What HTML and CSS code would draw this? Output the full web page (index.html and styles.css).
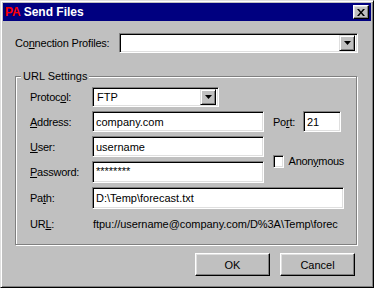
FILE: index.html
```html
<!DOCTYPE html>
<html lang="en">

<head>
    <meta charset="UTF-8">
    <title>Send Files</title>
    <link rel="stylesheet" href="styles.css">
</head>

<body>
    <div class="window">
        <div class="titlebar">
            <span class="title"><span class="title-logo">PA</span> Send Files</span>
            <button class="close-btn" type="button">
                <svg width="8" height="7" viewBox="0 0 8 7">
                    <path d="M0 0h2l2 2.4L6 0h2L5 3.5 8 7H6L4 4.6 2 7H0l3-3.5z" fill="#000" />
                </svg>
            </button>
        </div>
        <div class="dialog-body">
            <div class="profile-row">
                <label class="profile-label">Co<u>n</u>nection Profiles:</label>
                <div class="combo profile-combo">
                    <span class="combo-value"></span>
                    <span class="combo-btn">
                        <svg width="7" height="4" viewBox="0 0 7 4"><path d="M0 0h7L3.5 4z" fill="#000" /></svg>
                    </span>
                </div>
            </div>

            <fieldset class="group">
                <legend>URL Settings</legend>
                <div class="group-grid">
                    <label class="field-label">Protoc<u>o</u>l:</label>
                    <div class="combo protocol-combo">
                        <span class="combo-value">FTP</span>
                        <span class="combo-btn">
                            <svg width="7" height="4" viewBox="0 0 7 4"><path d="M0 0h7L3.5 4z" fill="#000" /></svg>
                        </span>
                    </div>

                    <label class="field-label"><u>A</u>ddress:</label>
                    <div class="edit">company.com</div>
                    <label class="port-label">Po<u>r</u>t:</label>
                    <div class="edit port-edit">21</div>

                    <label class="field-label"><u>U</u>ser:</label>
                    <div class="edit">username</div>
                    <div class="check-field">
                        <span class="checkbox"></span>
                        <span class="check-text">Anon<u>y</u>mous</span>
                    </div>

                    <label class="field-label"><u>P</u>assword:</label>
                    <div class="edit password-edit">********</div>

                    <label class="field-label">Pa<u>t</u>h:</label>
                    <div class="edit wide-edit">D:\Temp\forecast.txt</div>

                    <label class="field-label">UR<u>L</u>:</label>
                    <div class="url-text">ftpu://username@company.com/D%3A\Temp\forec</div>
                </div>
            </fieldset>

            <div class="button-row">
                <button class="push-btn" type="button">OK</button>
                <button class="push-btn" type="button">Cancel</button>
            </div>
        </div>
    </div>
</body>

</html>
```

FILE: styles.css
```css
body {
    margin: 0;
    font-family: 'Liberation Sans', Arial, sans-serif;
    font-size: 11px;
    color: #000;
    overflow: hidden;
}

.window {
    width: 374px;
    height: 288px;
    box-sizing: border-box;
    background-color: #c0c0c0;
    border: 1px solid;
    border-color: #dfdfdf #000 #000 #dfdfdf;
    box-shadow: inset 1px 1px #fff, inset -1px -1px #808080;
    padding: 2px;
}

.titlebar {
    height: 18px;
    background-color: #000080;
    display: flex;
    align-items: center;
    justify-content: space-between;
    padding: 0 2px;
}

.title {
    color: #fff;
    font-weight: bold;
    font-size: 12px;
}

.title-logo {
    color: #ff0000;
}

.close-btn {
    width: 16px;
    height: 14px;
    padding: 0;
    display: flex;
    align-items: center;
    justify-content: center;
    background-color: #c0c0c0;
    border: 1px solid;
    border-color: #fff #000 #000 #fff;
    box-shadow: inset -1px -1px #808080, inset 1px 1px #dfdfdf;
}

.dialog-body {
    padding: 12px 12px 0 12px;
}

.profile-row {
    display: flex;
    align-items: center;
}

.profile-label {
    width: 104px;
    letter-spacing: -0.2px;
}

/* sunken controls */
.combo,
.edit,
.checkbox {
    box-sizing: border-box;
    background-color: #fff;
    border: 1px solid;
    border-color: #808080 #fff #fff #808080;
    box-shadow: inset 1px 1px #000, inset -1px -1px #dfdfdf;
}

.combo {
    height: 20px;
    display: flex;
    align-items: center;
    padding: 2px;
}

.profile-combo {
    width: 239px;
}

.protocol-combo {
    width: 127px;
}

.combo-value {
    flex: 1;
    padding-left: 2px;
}

.combo-btn {
    width: 16px;
    height: 16px;
    box-sizing: border-box;
    display: flex;
    align-items: center;
    justify-content: center;
    background-color: #c0c0c0;
    border: 1px solid;
    border-color: #dfdfdf #000 #000 #dfdfdf;
    box-shadow: inset 1px 1px #fff, inset -1px -1px #808080;
}

.group {
    margin: 17px 0 0 0;
    width: 342px;
    box-sizing: border-box;
    border: 1px solid #808080;
    box-shadow: inset 1px 1px #fff, 1px 1px #fff;
    padding: 4px 12px 9px 14px;
}

.group legend {
    margin-left: -9px;
    padding: 0 2px;
    line-height: 13px;
    background-color: #c0c0c0;
}

.group-grid {
    display: grid;
    grid-template-columns: 62px 172px 9px 30px 41px;
    grid-template-rows: 20px 21px 21px 22px 22px 22px;
    row-gap: 4px;
}

.field-label {
    grid-column: 1;
    align-self: center;
    letter-spacing: -0.25px;
}

.port-label {
    grid-column: 4;
    align-self: center;
    letter-spacing: -0.25px;
}

.edit {
    display: flex;
    align-items: center;
    padding: 0 3px;
    white-space: nowrap;
    overflow: hidden;
}

.port-edit {
    width: 38px;
}

.password-edit {
    align-items: flex-start;
    padding-top: 3px;
}

.wide-edit {
    grid-column: 2 / 6;
}

.check-field {
    grid-column: 4 / 6;
    grid-row: span 2;
    align-self: center;
    display: flex;
    align-items: center;
    gap: 5px;
    margin-top: 3px;
}

.checkbox {
    width: 13px;
    height: 13px;
}

.check-text {
    letter-spacing: -0.3px;
}

.url-text {
    grid-column: 2 / 6;
    align-self: center;
    padding-left: 1px;
    white-space: nowrap;
    letter-spacing: -0.05px;
}

.button-row {
    display: flex;
    justify-content: flex-end;
    gap: 10px;
    margin-top: 8px;
    padding-right: 4px;
}

.push-btn {
    width: 75px;
    height: 23px;
    padding: 0;
    font-family: inherit;
    font-size: 11px;
    color: #000;
    background-color: #c0c0c0;
    border: 1px solid;
    border-color: #fff #000 #000 #fff;
    box-shadow: inset -1px -1px #808080, inset 1px 1px #dfdfdf;
}
```
